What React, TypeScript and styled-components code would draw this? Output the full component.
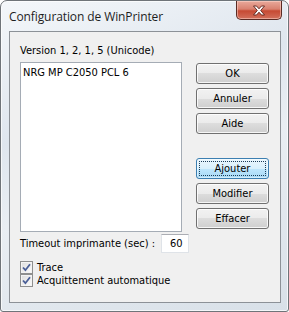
import React from 'react';
import styled, { createGlobalStyle } from 'styled-components';

const GlobalStyle = createGlobalStyle`
  html, body {
    margin: 0;
    padding: 0;
    background: #ffffff;
  }
`;

const Window = styled.div`
  width: 289px;
  height: 312px;
  box-sizing: border-box;
  border: 1px solid #6f7479;
  border-radius: 7px 7px 3px 3px;
  background: linear-gradient(160deg, #f4f7fa 0%, #dfe6ee 35%, #e9eef3 55%, #d8e0e8 100%);
  display: flex;
  flex-direction: column;
  box-shadow: inset 0 0 0 1px rgba(255, 255, 255, 0.7);
`;

const TitleBar = styled.div`
  height: 30px;
  display: flex;
  align-items: flex-start;
  justify-content: space-between;
  padding: 0 6px 0 8px;
`;

const Title = styled.span`
  font-family: "Open Sans", "Noto Sans", sans-serif;
  font-size: 12px;
  color: #1e1e1e;
  margin-top: 7px;
  letter-spacing: -0.1px;
`;

const CloseButton = styled.div`
  width: 46px;
  height: 19px;
  box-sizing: border-box;
  border: 1px solid #5a2b24;
  border-top: none;
  border-radius: 0 0 5px 5px;
  background: linear-gradient(#e9a99b 0%, #d98170 45%, #c64a33 55%, #d2705c 100%);
  display: flex;
  align-items: center;
  justify-content: center;
  box-shadow: inset 0 0 0 1px rgba(255, 220, 210, 0.5);
`;

const Client = styled.div`
  flex: 1;
  margin: 0 7px 8px 8px;
  border: 1px solid #8c9197;
  background: #f0f0f0;
  padding: 12px 10px 0 10px;
  display: flex;
  flex-direction: column;
  font-family: "DejaVu Sans Condensed", "DejaVu Sans", sans-serif;
  font-size: 11px;
  color: #000;
`;

const Label = styled.div`
  height: 13px;
  line-height: 13px;
  white-space: nowrap;
`;

const MainRow = styled.div`
  display: flex;
  gap: 14px;
  margin-top: 5px;
`;

const ListBox = styled.div`
  width: 162px;
  height: 170px;
  box-sizing: border-box;
  border: 1px solid #a5acb5;
  background: #ffffff;
  padding: 3px 2px;
  line-height: 13px;
`;

const ButtonColumn = styled.div`
  display: flex;
  flex-direction: column;
  padding-top: 1px;
`;

const Button = styled.div<{ $default?: boolean; $gap?: number }>`
  width: 73px;
  height: 21px;
  box-sizing: border-box;
  margin-top: ${(p) => p.$gap ?? 0}px;
  border: 1px solid ${(p) => (p.$default ? '#3c7fb1' : '#707070')};
  border-radius: 3px;
  background: ${(p) =>
    p.$default
      ? 'linear-gradient(#eaf6fd 0%, #d9f0fc 50%, #bee6fd 50%, #a7d9f5 100%)'
      : 'linear-gradient(#f2f2f2 0%, #ebebeb 50%, #dddddd 50%, #cfcfcf 100%)'};
  box-shadow: inset 0 0 0 1px ${(p) => (p.$default ? 'rgba(255,255,255,0.5)' : 'rgba(255,255,255,0.8)')};
  display: flex;
  align-items: center;
  justify-content: center;
  position: relative;

  span {
    line-height: 13px;
  }

  ${(p) =>
    p.$default &&
    `
    &::after {
      content: '';
      position: absolute;
      inset: 2px;
      border: 1px dotted #1b3b57;
      border-radius: 1px;
    }
  `}
`;

const TimeoutRow = styled.div`
  display: flex;
  align-items: center;
  margin-top: 2px;
`;

const TimeoutInput = styled.div`
  width: 28px;
  height: 19px;
  box-sizing: border-box;
  margin-left: 6px;
  border: 1px solid #dfe3e8;
  border-top-color: #abadb3;
  background: #ffffff;
  padding-left: 8px;
  line-height: 17px;
`;

const CheckList = styled.div`
  display: flex;
  flex-direction: column;
  margin-top: 8px;
`;

const CheckRow = styled.div`
  display: flex;
  align-items: center;
  gap: 4px;
  height: 13px;
  line-height: 13px;
`;

const Box = styled.div`
  width: 13px;
  height: 13px;
  box-sizing: border-box;
  border: 1px solid #8e8f8f;
  background: linear-gradient(135deg, #dcdcdc 0%, #fdfdfd 100%);
  display: flex;
  align-items: center;
  justify-content: center;
  box-shadow: inset 0 0 0 1px #f4f4f4;
`;

function CloseGlyph() {
  return (
    <svg width="14" height="11" viewBox="0 0 14 11">
      <path
        d="M1.5 1 H4.5 L7 3.8 L9.5 1 H12.5 L8.7 5.5 L12.5 10 H9.5 L7 7.2 L4.5 10 H1.5 L5.3 5.5 Z"
        fill="#ffffff"
        stroke="#5b1f17"
        strokeWidth="0.9"
        strokeLinejoin="round"
      />
    </svg>
  );
}

function Check() {
  return (
    <svg width="9" height="9" viewBox="0 0 9 9">
      <path d="M1 4.5 L3.4 7.2 L8 1.2" fill="none" stroke="#4a5f97" strokeWidth="1.8" />
    </svg>
  );
}

function CheckBox({ label }: { label: string }) {
  return (
    <CheckRow>
      <Box>
        <Check />
      </Box>
      <span>{label}</span>
    </CheckRow>
  );
}

export default function App() {
  return (
    <>
      <GlobalStyle />
      <Window>
        <TitleBar>
          <Title>Configuration de WinPrinter</Title>
          <CloseButton>
            <CloseGlyph />
          </CloseButton>
        </TitleBar>
        <Client>
          <Label>Version 1, 2, 1, 5 (Unicode)</Label>
          <MainRow>
            <ListBox>NRG MP C2050 PCL 6</ListBox>
            <ButtonColumn>
              <Button><span>OK</span></Button>
              <Button $gap={4}><span>Annuler</span></Button>
              <Button $gap={4}><span>Aide</span></Button>
              <Button $default $gap={24}><span>Ajouter</span></Button>
              <Button $gap={4}><span>Modifier</span></Button>
              <Button $gap={4}><span>Effacer</span></Button>
            </ButtonColumn>
          </MainRow>
          <TimeoutRow>
            <Label>Timeout imprimante (sec) :</Label>
            <TimeoutInput>60</TimeoutInput>
          </TimeoutRow>
          <CheckList>
            <CheckBox label="Trace" />
            <CheckBox label="Acquittement automatique" />
          </CheckList>
        </Client>
      </Window>
    </>
  );
}
